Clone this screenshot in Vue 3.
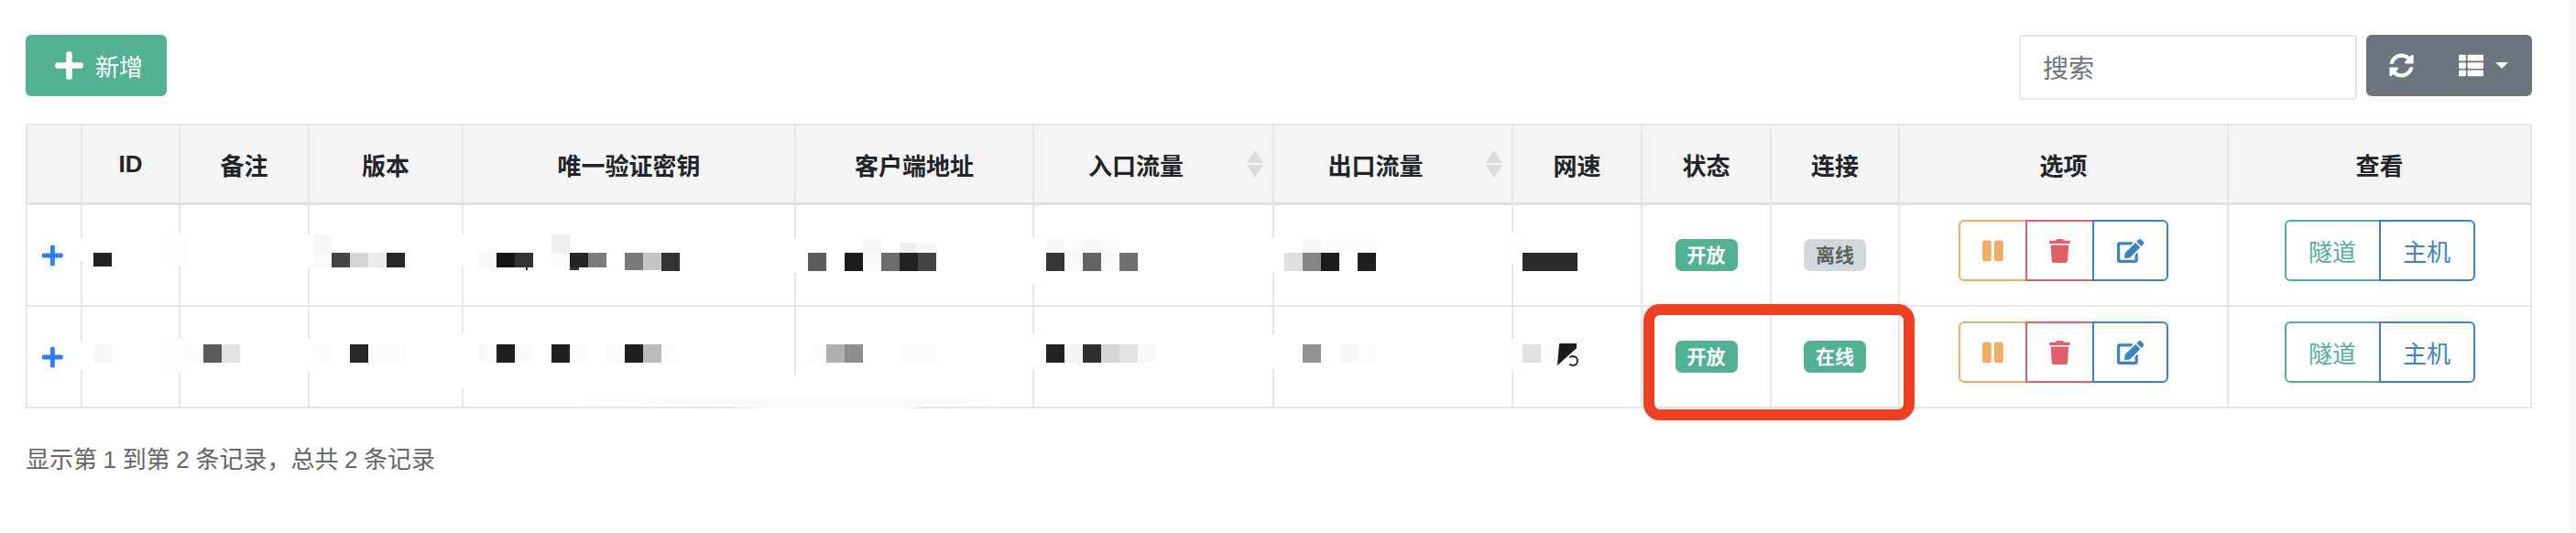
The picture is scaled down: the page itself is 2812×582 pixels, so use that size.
<script setup>
const icons = {
  plus: { vb: '0 0 448 512', d: 'M416 208H272V64c0-17.67-14.33-32-32-32h-32c-17.67 0-32 14.33-32 32v144H32c-17.67 0-32 14.33-32 32v32c0 17.67 14.33 32 32 32h144v144c0 17.67 14.33 32 32 32h32c17.67 0 32-14.33 32-32V304h144c17.67 0 32-14.33 32-32v-32c0-17.67-14.33-32-32-32z' },
  sync: { vb: '0 0 512 512', d: 'M370.72 133.28C339.458 104.008 298.888 87.962 255.848 88c-77.458.068-144.328 53.178-162.791 126.85-1.344 5.363-6.122 9.15-11.651 9.15H24.103c-7.498 0-13.194-6.807-11.807-14.176C33.933 94.924 134.813 8 256 8c66.448 0 126.791 26.136 171.315 68.685L463.03 40.97C478.149 25.851 504 36.559 504 57.941V192c0 13.255-10.745 24-24 24H345.941c-21.382 0-32.09-25.851-16.971-40.971l41.75-41.749zM32 296h134.059c21.382 0 32.09 25.851 16.971 40.971l-41.75 41.75c31.262 29.273 71.835 45.319 114.876 45.28 77.418-.07 144.315-53.144 162.787-126.849 1.344-5.363 6.122-9.15 11.651-9.15h57.304c7.498 0 13.194 6.807 11.807 14.176C478.067 417.076 377.187 504 256 504c-66.448 0-126.791-26.136-171.315-68.685L48.97 471.03C33.851 486.149 8 475.441 8 454.059V320c0-13.255 10.745-24 24-24z' },
  list: { vb: '0 0 512 512', d: 'M149.333 216v80c0 13.255-10.745 24-24 24H24c-13.255 0-24-10.745-24-24v-80c0-13.255 10.745-24 24-24h101.333c13.255 0 24 10.745 24 24zM0 376v80c0 13.255 10.745 24 24 24h101.333c13.255 0 24-10.745 24-24v-80c0-13.255-10.745-24-24-24H24c-13.255 0-24 10.745-24 24zM125.333 32H24C10.745 32 0 42.745 0 56v80c0 13.255 10.745 24 24 24h101.333c13.255 0 24-10.745 24-24V56c0-13.255-10.745-24-24-24zm80 448H488c13.255 0 24-10.745 24-24v-80c0-13.255-10.745-24-24-24H205.333c-13.255 0-24 10.745-24 24v80c0 13.255 10.745 24 24 24zm-24-424v80c0 13.255 10.745 24 24 24H488c13.255 0 24-10.745 24-24V56c0-13.255-10.745-24-24-24H205.333c-13.255 0-24 10.745-24 24zm24 264H488c13.255 0 24-10.745 24-24v-80c0-13.255-10.745-24-24-24H205.333c-13.255 0-24 10.745-24 24v80c0 13.255 10.745 24 24 24z' },
  pause: { vb: '0 0 448 512', d: 'M144 479H48c-26.5 0-48-21.5-48-48V79c0-26.5 21.5-48 48-48h96c26.5 0 48 21.5 48 48v352c0 26.5-21.5 48-48 48zm304-48V79c0-26.5-21.5-48-48-48h-96c-26.5 0-48 21.5-48 48v352c0 26.5 21.5 48 48 48h96c26.5 0 48-21.5 48-48z' },
  trash: { vb: '0 0 448 512', d: 'M432 32H312l-9.4-18.7A24 24 0 0 0 281.1 0H166.8a23.72 23.72 0 0 0-21.4 13.3L136 32H16A16 16 0 0 0 0 48v32a16 16 0 0 0 16 16h416a16 16 0 0 0 16-16V48a16 16 0 0 0-16-16zM53.2 467a48 48 0 0 0 47.9 45h245.8a48 48 0 0 0 47.9-45L416 128H32z' },
  edit: { vb: '0 0 576 512', d: 'M402.6 83.2l90.2 90.2c3.8 3.8 3.8 10 0 13.8L274.4 405.6l-92.8 10.3c-12.4 1.4-22.9-9.1-21.5-21.5l10.3-92.8L388.8 83.2c3.8-3.8 10-3.8 13.8 0zm162-22.9l-48.8-48.8c-15.2-15.2-39.9-15.2-55.2 0l-35.4 35.4c-3.8 3.8-3.8 10 0 13.8l90.2 90.2c3.8 3.8 10 3.8 13.8 0l35.4-35.4c15.2-15.3 15.2-40 0-55.2zM384 346.2V448H64V128h229.8c3.2 0 6.2-1.3 8.5-3.5l40-40c7.6-7.6 2.2-20.5-8.5-20.5H48C21.5 64 0 85.5 0 112v352c0 26.5 21.5 48 48 48h352c26.5 0 48-21.5 48-48V306.2c0-10.7-12.9-16-20.5-8.5l-40 40c-2.2 2.3-3.5 5.3-3.5 8.5z' }
}

const columns = [
  { w: 60, t: '' }, { w: 107, t: 'ID' }, { w: 141, t: '备注' }, { w: 168, t: '版本' },
  { w: 363, t: '唯一验证密钥' }, { w: 260, t: '客户端地址' }, { w: 262, t: '入口流量', sort: true },
  { w: 261, t: '出口流量', sort: true }, { w: 141, t: '网速' }, { w: 141, t: '状态' },
  { w: 140, t: '连接' }, { w: 359, t: '选项' }, { w: 331, t: '查看' }
]

const rows = [
  { open: '开放', link: '离线', online: false },
  { open: '开放', link: '在线', online: true }
]

// Redaction mosaic laid over the table: [x, y, w, h, colour]
const mosaic = [
  // white patches that break the column lines
  [87, 260, 4, 25, '#fff'], [183, 255, 20, 35, '#fdfdfd'], [336, 256, 4, 36, '#fff'], [504, 256, 4, 36, '#fff'],
  [867, 260, 4, 37, '#fff'], [1127, 260, 4, 50, '#fff'], [1389, 260, 4, 37, '#fff'], [1648, 253, 14, 35, '#fefefe'],
  [87, 372, 4, 33, '#fff'], [183, 370, 20, 37, '#fdfdfd'], [336, 370, 4, 37, '#fff'], [504, 363, 4, 61, '#fff'],
  [867, 410, 4, 34, '#fff'], [1127, 366, 4, 36, '#fff'], [1389, 366, 4, 36, '#fff'], [1643, 370, 19, 35, '#fdfdfd'],
  // row 1, upper band
  [342, 256, 20, 20, '#f7f7f7'], [602, 256, 20, 20, '#efefef'], [942, 261, 20, 15, '#f6f6f6'], [982, 265, 20, 11, '#efefef'],
  [1002, 266, 20, 10, '#f5f5f5'], [1142, 261, 20, 15, '#f8f8f8'], [1162, 261, 20, 15, '#fbfbfb'], [1182, 261, 20, 15, '#f6f6f6'],
  [1202, 261, 20, 15, '#fbfbfb'], [1422, 261, 20, 15, '#f6f6f6'], [1442, 261, 20, 15, '#fafafa'], [1462, 261, 20, 15, '#fbfbfb'],
  [1482, 261, 20, 15, '#fbfbfb'],
  // row 1, main band
  [102, 276, 20, 15, '#222222'],
  [342, 276, 20, 16, '#f9f9fb'], [362, 276, 20, 16, '#444444'], [382, 276, 20, 16, '#d6d6d8'], [402, 276, 20, 16, '#ececec'], [422, 276, 20, 16, '#282828'],
  [522, 276, 20, 16, '#f7f7f9'], [542, 276, 20, 16, '#151515'], [562, 276, 20, 16, '#333333'], [602, 276, 20, 16, '#fafafc'],
  [622, 276, 20, 16, '#252525'], [642, 276, 20, 16, '#7c7c7c'], [682, 276, 20, 19, '#797979'], [702, 276, 20, 19, '#c4c4c4'], [722, 276, 20, 20, '#333333'],
  [574, 292, 2, 3, '#333333'], [622, 292, 10, 3, '#333333'],
  [882, 276, 20, 20, '#5c5c5c'], [922, 276, 20, 20, '#1d1d1d'], [942, 276, 20, 20, '#fafafc'], [962, 276, 20, 20, '#6c6c6c'], [982, 276, 20, 20, '#222222'], [1002, 276, 20, 20, '#444444'],
  [1142, 276, 20, 20, '#363636'], [1162, 276, 20, 20, '#f9f9f9'], [1182, 276, 20, 20, '#636363'], [1202, 276, 20, 20, '#f9f9fb'], [1222, 276, 20, 20, '#707070'],
  [1402, 276, 20, 20, '#dedee0'], [1422, 276, 20, 20, '#858585'], [1442, 276, 20, 20, '#1c1c1c'], [1482, 276, 20, 20, '#1f1f1f'],
  [1662, 276, 60, 20, '#2b2b2b'],
  // row 2
  [102, 376, 20, 20, '#f8f8f8'],
  [202, 376, 20, 20, '#fbfbfb'], [222, 376, 20, 20, '#5c5c5c'], [242, 376, 20, 20, '#e3e3e5'],
  [342, 376, 20, 20, '#fbfbfd'], [382, 376, 20, 20, '#28282a'], [402, 376, 20, 20, '#fbfbfb'], [422, 376, 20, 20, '#fcfcfc'],
  [522, 376, 20, 20, '#f9f9fb'], [542, 376, 20, 20, '#202022'], [562, 376, 20, 20, '#fafafc'], [602, 376, 20, 20, '#202022'], [622, 376, 20, 20, '#fbfbfb'],
  [662, 376, 20, 20, '#f9f9fb'], [682, 376, 20, 20, '#1f1f21'], [702, 376, 20, 20, '#bbbbbb'], [722, 376, 20, 20, '#fcfcfe'],
  [882, 376, 20, 20, '#fcfcfc'], [902, 376, 20, 20, '#b0b0b0'], [922, 376, 20, 20, '#8e8e8e'], [982, 376, 20, 20, '#fcfcfc'], [1002, 376, 20, 20, '#fbfbfb'],
  [1142, 376, 20, 20, '#222222'], [1162, 376, 20, 20, '#f5f5f5'], [1182, 376, 20, 20, '#2f2f31'], [1202, 376, 20, 20, '#d6d6d8'], [1222, 376, 20, 20, '#e2e2e4'], [1242, 376, 20, 20, '#f9f9f9'],
  [1422, 376, 20, 20, '#929292'], [1462, 376, 20, 20, '#f8f8fa'], [1482, 376, 20, 20, '#fbfbfb'],
  [1662, 376, 20, 20, '#e0e0e0'], [1682, 376, 20, 20, '#fbfbfb']
]

const tileStyle = (t) => ({ left: t[0] + 'px', top: t[1] + 'px', width: t[2] + 'px', height: t[3] + 'px', background: t[4] })
</script>

<template>
  <div class="page">
    <div class="toolbar">
      <button class="btn-add" type="button">
        <svg class="ic-add" :viewBox="icons.plus.vb" fill="currentColor"><path :d="icons.plus.d" /></svg>
        <span>新增</span>
      </button>
      <div class="tools">
        <input class="search" type="text" placeholder="搜索" />
        <div class="tool-group">
          <button class="tool tool-refresh" type="button">
            <svg class="ic-tool" :viewBox="icons.sync.vb" fill="currentColor"><path :d="icons.sync.d" /></svg>
          </button>
          <button class="tool tool-cols" type="button">
            <svg class="ic-tool" :viewBox="icons.list.vb" fill="currentColor"><path :d="icons.list.d" /></svg>
            <span class="caret"></span>
          </button>
        </div>
      </div>
    </div>

    <table class="grid">
      <colgroup>
        <col v-for="(c, i) in columns" :key="i" :style="{ width: c.w + 'px' }" />
      </colgroup>
      <thead>
        <tr>
          <th v-for="(c, i) in columns" :key="i" :class="{ sortable: c.sort }">
            {{ c.t }}
            <span v-if="c.sort" class="sort"><i class="up"></i><i class="down"></i></span>
          </th>
        </tr>
      </thead>
      <tbody>
        <tr v-for="(r, i) in rows" :key="i">
          <td class="expand">
            <svg class="ic-row" :viewBox="icons.plus.vb" fill="currentColor"><path :d="icons.plus.d" /></svg>
          </td>
          <td v-for="n in 8" :key="n"></td>
          <td class="center"><span class="badge on">{{ r.open }}</span></td>
          <td class="center"><span class="badge" :class="r.online ? 'on' : 'off'">{{ r.link }}</span></td>
          <td class="center top">
            <div class="group">
              <button class="ob orange wide" type="button"><svg class="ic-row" :viewBox="icons.pause.vb" fill="currentColor"><path :d="icons.pause.d" /></svg></button>
              <button class="ob red wide" type="button"><svg class="ic-row" :viewBox="icons.trash.vb" fill="currentColor"><path :d="icons.trash.d" /></svg></button>
              <button class="ob blue last" type="button"><svg class="ic-row" :viewBox="icons.edit.vb" fill="currentColor"><path :d="icons.edit.d" /></svg></button>
            </div>
          </td>
          <td class="center top">
            <div class="group">
              <button class="ob green txt" type="button">隧道</button>
              <button class="ob blue txt" type="button">主机</button>
            </div>
          </td>
        </tr>
      </tbody>
    </table>

    <p class="summary">显示第 1 到第 2 条记录，总共 2 条记录</p>

    <div v-for="(t, i) in mosaic" :key="i" class="tile" :style="tileStyle(t)"></div>
    <div class="speck"></div>
    <div class="curl"></div>
    <div class="wedge"></div>
    <div class="mark"></div>
  </div>
</template>

<style scoped>
.page {
  position: relative;
  box-sizing: border-box;
  min-height: 582px;
  padding: 38px 41px 0 28px;
  border-right: 7px solid #f6f6f6;
  background: #fff;
  font-family: "Liberation Sans", "Noto Sans CJK SC", sans-serif;
  color: #212529;
}
button { font-family: inherit; cursor: pointer; background: none; }
.toolbar { display: flex; justify-content: space-between; align-items: flex-start; }
.btn-add {
  display: flex; align-items: center; gap: 13px;
  height: 67px; width: 154px; padding: 0 0 0 32px; box-sizing: border-box;
  border: 0; border-radius: 6px; background: #52b193; color: #fff; font-size: 26px;
}
.ic-add { width: 31px; height: 35px; display: block; }
.tools { display: flex; align-items: flex-start; gap: 10px; }
.search {
  box-sizing: border-box; width: 369px; height: 71px; padding: 4px 24px 0;
  border: 2px solid #e6e6e6; border-radius: 3px; outline: 0;
  font-family: inherit; font-size: 28px; color: #495057; background: #fff;
}
.search::placeholder { color: #6c757d; opacity: 1; }
.tool-group { display: flex; height: 67px; border-radius: 6px; background: #6c757d; color: #fff; }
.tool { display: flex; align-items: center; border: 0; color: #fff; padding: 0; }
.tool-refresh { padding: 0 25px; }
.tool-cols { padding: 0 26px 0 24px; gap: 13px; }
.ic-tool { width: 27px; height: 27px; display: block; }
.caret { width: 0; height: 0; border-left: 7px solid transparent; border-right: 7px solid transparent; border-top: 7px solid #fff; }

.grid {
  table-layout: fixed; width: 2736px; margin-top: 26px;
  border-collapse: separate; border-spacing: 0;
  border-top: 2px solid #e6e6e6; border-left: 2px solid #e6e6e6;
}
.grid th, .grid td { box-sizing: border-box; border-right: 2px solid #e6e6e6; padding: 0; }
.grid th {
  position: relative; height: 87px; background: #f4f4f4;
  border-bottom: 3px solid #e0e0e0;
  font-size: 26px; font-weight: 700; text-align: center; vertical-align: middle;
}
.grid th.sortable { padding-right: 38px; }
.grid td { height: 111px; border-bottom: 2px solid #e6e6e6; vertical-align: middle; }
.grid td.center { text-align: center; }
.grid td.top { vertical-align: top; padding-top: 16px; }
.grid td.expand { padding-left: 16px; color: #2f7df6; }
.sort { position: absolute; right: 10px; top: 27px; display: flex; flex-direction: column; gap: 2px; }
.sort i { display: block; width: 0; height: 0; border-left: 9px solid transparent; border-right: 9px solid transparent; }
.sort .up { border-bottom: 14px solid #dcdcdc; }
.sort .down { border-top: 14px solid #dcdcdc; }
.ic-row { height: 26px; display: block; }
.badge {
  display: inline-block; height: 35px; padding: 0 13px; border-radius: 7px;
  font-size: 21px; font-weight: 700; line-height: 35px; vertical-align: middle;
}
.badge.on { background: #52b193; color: #fff; }
.badge.off { background: #d2d9dd; color: #5f5f5f; }
.group { display: inline-flex; vertical-align: top; }
.ob {
  display: flex; align-items: center; justify-content: center; box-sizing: border-box;
  height: 67px; padding: 0; border: 2px solid currentColor; margin-left: -2px;
  font-size: 26px; background: #fff;
}
.ob:first-child { margin-left: 0; border-radius: 6px 0 0 6px; }
.ob:last-child { border-radius: 0 6px 6px 0; }
.wide { width: 75px; }
.last { width: 83px; }
.txt { width: 105px; }
.orange { color: #f0ad63; }
.red { color: #e0606a; }
.blue { color: #3a83c5; }
.green { color: #52b193; }
.summary { margin: 38px 0 0; font-size: 26px; line-height: 36px; color: #666; word-spacing: -0.6px; }

.tile { position: absolute; }
.speck {
  position: absolute; left: 1700px; top: 375px; width: 21px; height: 24px;
  background: #1c1c1c; clip-path: polygon(10% 0, 100% 0, 100% 22%, 0 100%);
}
.curl {
  position: absolute; left: 1711px; top: 388px; width: 12px; height: 12px; box-sizing: border-box;
  border: 2px solid #222; border-left-color: transparent; border-radius: 50%;
}
.wedge {
  position: absolute; left: 627px; top: 436px; width: 463px; height: 10px;
  background: #fafafa; clip-path: polygon(0 0, 100% 0, 78.4% 100%, 44.5% 100%);
}
.mark {
  position: absolute; left: 1794px; top: 332px; width: 296px; height: 127px; box-sizing: border-box;
  border: 12px solid #ee4023; border-radius: 18px;
}
</style>
